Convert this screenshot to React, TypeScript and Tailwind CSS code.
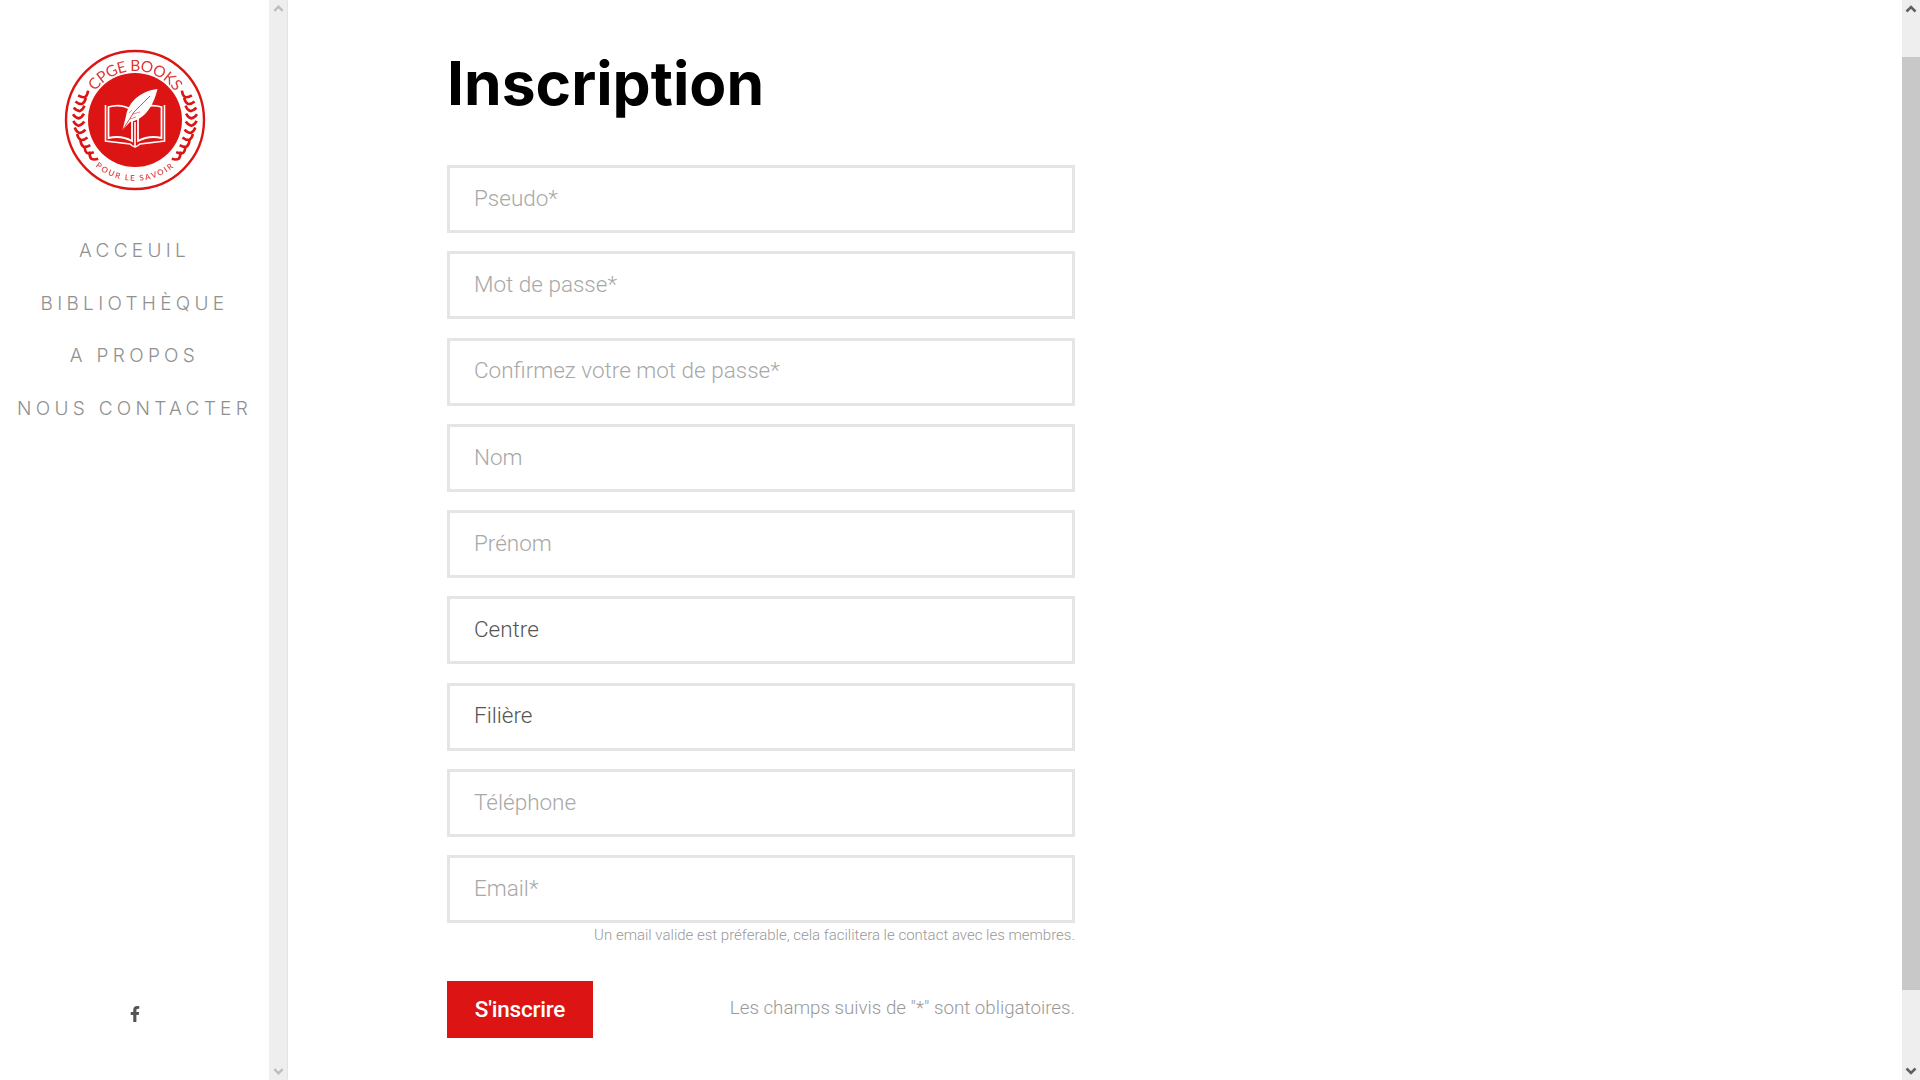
import { FaFacebookF } from "react-icons/fa";

const RED = "#dc1414";

function Laurel({ side }: { side: 1 | -1 }) {
  const items = [];
  const cx = 134;
  const cy = 120;
  const r = 56.5;
  const n = 10;
  for (let i = 0; i < n; i++) {
    const deg = 26 - (i * 67) / (n - 1);
    const a = (deg * Math.PI) / 180;
    const x = cx + side * -r * Math.cos(a);
    const y = cy - r * Math.sin(a);
    const rot = side * -deg;
    items.push(
      <g key={i} transform={`translate(${x} ${y}) rotate(${rot})`}>
        <path d="M-5.5 -2.5 Q-3 1.5 0 2 Q3 1.5 5.5 -2.5" fill="none" stroke={RED} strokeWidth="2.6" />
      </g>,
    );
  }
  return <g>{items}</g>;
}

function Logo() {
  return (
    <svg width="268" height="235" viewBox="0 0 268 235" className="block blur-[0.4px]" aria-label="CPGE Books">
      <defs>
        <path id="logoTop" d="M85 120 A49 49 0 0 1 183 120" />
        <path id="logoBottom" d="M73 120 A61 61 0 0 0 195 120" />
      </defs>
      <circle cx="134" cy="120" r="69" fill="#fff" stroke={RED} strokeWidth="2.4" />
      <circle cx="134" cy="120" r="47" fill={RED} />
      <text fontFamily="Lato, sans-serif" fontSize="15.5" fill={RED} opacity="0.85" letterSpacing="-0.5">
        <textPath href="#logoTop" startOffset="50%" textAnchor="middle">CPGE BOOKS</textPath>
      </text>
      <text fontFamily="Lato, sans-serif" fontSize="8" fontWeight="700" fill={RED} opacity="0.75" letterSpacing="1.6">
        <textPath href="#logoBottom" startOffset="50%" textAnchor="middle">POUR LE SAVOIR</textPath>
      </text>
      <Laurel side={1} />
      <Laurel side={-1} />
      <path d="M104.5 105 V141 L129 144 Q131 146 134 147 Q137 146 139 144 L163.5 141 V105" fill="none" stroke="#fff" strokeWidth="1.6" />
      <path d="M107.5 107 Q120 103 131 110 V141 Q120 135 107.5 138Z M137 110 Q148 103 160.5 107 V138 Q148 135 137 141Z" fill={RED} stroke="#fff" strokeWidth="1.8" />
      <path d="M134 122 V146" stroke="#fff" strokeWidth="1.6" />
      <path d="M156.5 89 C141 91 128 100 125 116 L121.5 130 L129 122 C142 120 152 108 156.5 89Z" fill="#fff" />
      <path d="M122 129.5 L133 112 L149 96" fill="none" stroke={RED} strokeWidth="0.8" />
      <path d="M129 119 L135 117 M132 114 L139 112 M128 113 L131 110" fill="none" stroke={RED} strokeWidth="0.5" />
    </svg>
  );
}

function Chevron({ up, color, w }: { up: boolean; color: string; w: number }) {
  return (
    <svg width={w} height={w} viewBox="0 0 12 12" className="block">
      <path d={up ? "M1.5 8.5 L6 4 L10.5 8.5" : "M1.5 3.5 L6 8 L10.5 3.5"} fill="none" stroke={color} strokeWidth="2.6" />
    </svg>
  );
}

const NAV = ["ACCEUIL", "BIBLIOTHÈQUE", "A PROPOS", "NOUS CONTACTER"];

const FIELDS: { label: string; dark?: boolean }[] = [
  { label: "Pseudo*" },
  { label: "Mot de passe*" },
  { label: "Confirmez votre mot de passe*" },
  { label: "Nom" },
  { label: "Prénom" },
  { label: "Centre", dark: true },
  { label: "Filière", dark: true },
  { label: "Téléphone" },
  { label: "Email*" },
];

export default function App() {
  return (
    <div className="flex h-screen w-full overflow-hidden bg-white font-['Roboto',sans-serif]">
      <aside className="flex w-[269px] shrink-0 flex-col items-center">
        <Logo />
        <nav className="flex flex-col items-center gap-[21.5px] font-['Inter',sans-serif] text-[19px] leading-[31px] font-light tracking-[4.3px] text-[#909090]">
          {NAV.map((n) => (
            <a key={n} className="block whitespace-nowrap">
              {n}
            </a>
          ))}
        </nav>
        <div className="mt-auto mb-[58px] text-[#555]">
          <FaFacebookF size={16} />
        </div>
      </aside>

      <div className="flex w-[19px] shrink-0 flex-col items-center justify-between border-r border-[#e4e4e4] bg-[#eeeeee] py-[3px]">
        <Chevron up color="#bdbdbd" w={11} />
        <Chevron up={false} color="#bdbdbd" w={11} />
      </div>

      <main className="flex-1 pl-[159px]">
        <h1 className="mt-[42px] text-[60.5px] leading-[82px] font-bold text-black font-['Inter',sans-serif]">Inscription</h1>
        <form className="mt-[41px] w-[628px]">
          <div className="flex flex-col gap-[18.25px]">
            {FIELDS.map((f) => (
              <div
                key={f.label}
                className={`flex h-[68px] items-center border-[3px] border-[#e5e5e5] px-6 pb-[0.5px] text-[22.5px] font-light ${f.dark ? "text-[#555]" : "text-[#a8a8a8]"}`}
              >
                {f.label}
              </div>
            ))}
          </div>
          <p className="mt-[2px] text-right text-[15px] leading-[20px] font-light text-[#999]">
            Un email valide est préferable, cela facilitera le contact avec les membres.
          </p>
          <div className="mt-[36px] flex items-center justify-between">
            <button type="button" className="h-[57px] w-[146px] bg-[#dc1414] text-[22.5px] font-medium tracking-[-0.2px] text-white">
              S'inscrire
            </button>
            <span className="pb-[2px] text-[18.75px] font-light text-[#999]">Les champs suivis de "*" sont obligatoires.</span>
          </div>
        </form>
      </main>

      <div className="relative flex w-[18px] shrink-0 flex-col bg-[#eeeeee]">
        <div className="flex h-[57px] justify-center pt-[3px]">
          <Chevron up color="#606060" w={12} />
        </div>
        <div className="h-[933px] bg-[#c8c8c8]" />
        <div className="mt-auto flex justify-center pb-[3px]">
          <Chevron up={false} color="#606060" w={12} />
        </div>
      </div>
    </div>
  );
}
